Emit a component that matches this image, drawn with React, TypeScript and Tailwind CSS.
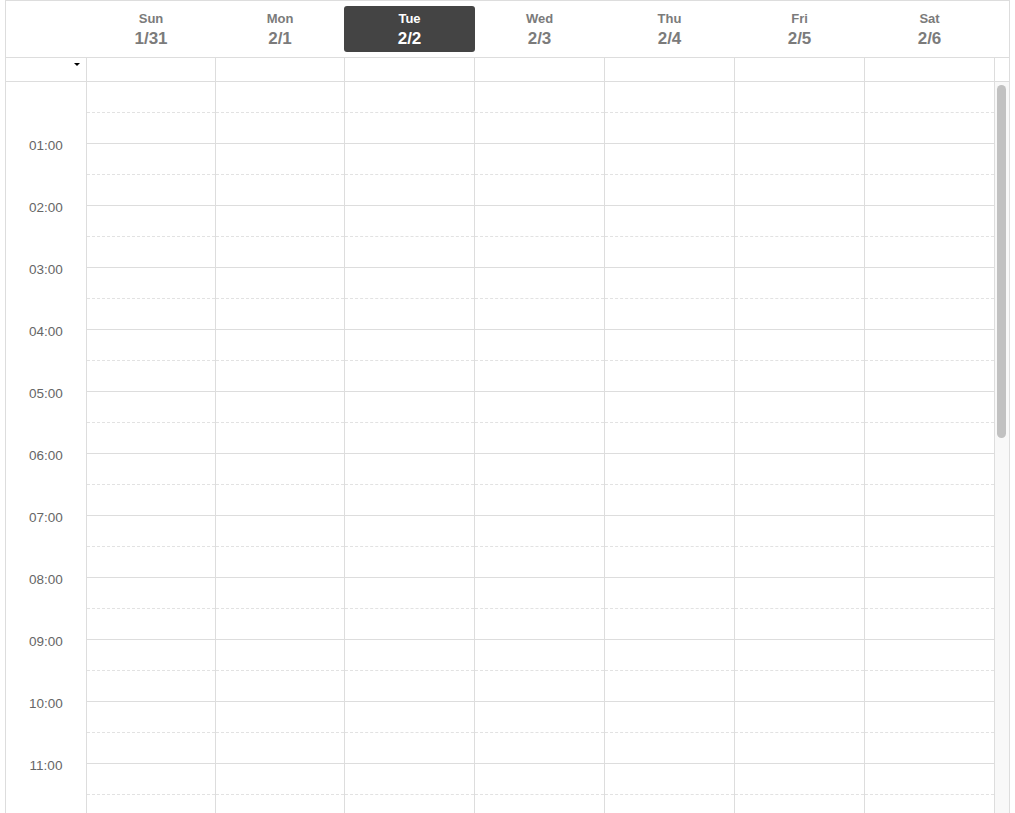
import React from "react";

const days = [
  { name: "Sun", date: "1/31" },
  { name: "Mon", date: "2/1" },
  { name: "Tue", date: "2/2", active: true },
  { name: "Wed", date: "2/3" },
  { name: "Thu", date: "2/4" },
  { name: "Fri", date: "2/5" },
  { name: "Sat", date: "2/6" },
];

const hours = Array.from({ length: 11 }, (_, i) => `${String(i + 1).padStart(2, "0")}:00`);
const slots = Array.from({ length: 24 }, (_, i) => i);

const cols = "grid grid-cols-[81px_129px_129px_130px_130px_130px_130px_130px_14px]";

export default function App() {
  return (
    <div
      className="h-[813px] w-[1015px] overflow-hidden bg-white"
      style={{ fontFamily: '"Liberation Sans", Arial, sans-serif' }}
    >
      <div className="ml-[5px] w-[1005px] border-l border-r border-t border-[#dddddd]">
        {/* Header */}
        <div className={cols + " h-[57px] border-b border-[#dddddd]"}>
          <div />
          {days.map((d) => (
            <div key={d.name} className="py-[5px]">
              <div
                className={
                  "-ml-[1px] flex h-full flex-col items-center justify-center rounded-[3px] pt-[1px] font-bold " +
                  (d.active ? "bg-[#444444] text-white" : "text-[#7b7b7b]")
                }
              >
                <div className="text-[13px] leading-[18px]">{d.name}</div>
                <div className="text-[17px] leading-[21px]">{d.date}</div>
              </div>
            </div>
          ))}
          <div />
        </div>

        {/* All-day row */}
        <div className={cols + " h-[24px] border-b border-[#dddddd]"}>
          <div className="flex justify-end border-r border-[#dddddd] pr-[6px] pt-[5px]">
            <div className="h-0 w-0 border-l-[3px] border-r-[3px] border-t-[3px] border-l-transparent border-r-transparent border-t-black" />
          </div>
          {days.map((d) => (
            <div key={d.name} className="border-r border-[#dddddd]" />
          ))}
          <div />
        </div>

        {/* Body */}
        <div className={cols}>
          <div className="border-r border-[#dddddd]">
            <div className="h-[33px]" />
            {hours.map((h) => (
              <div key={h} className="flex h-[62px] items-center justify-center text-[13.5px] text-[#666666]">
                {h}
              </div>
            ))}
          </div>
          {days.map((d) => (
            <div key={d.name} className="border-r border-[#dddddd]">
              {slots.map((s) => (
                <div
                  key={s}
                  className={
                    "h-[31px] border-b " +
                    (s % 2 === 0 ? "border-dashed border-[#e2e2e2]" : "border-solid border-[#dddddd]")
                  }
                />
              ))}
            </div>
          ))}
          <div className="bg-[#f8f8f8] pl-[2px] pt-[3px]">
            <div className="h-[353px] w-[9px] rounded-full bg-[#c1c1c1]" />
          </div>
        </div>
      </div>
    </div>
  );
}
